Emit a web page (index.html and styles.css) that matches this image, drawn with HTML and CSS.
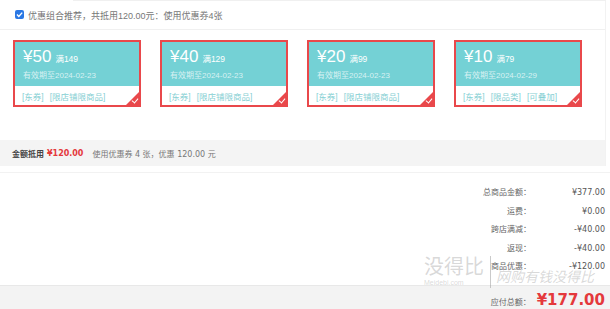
FILE: index.html
```html
<!DOCTYPE html>
<html lang="zh">
<head>
    <meta charset="UTF-8">
    <title>优惠券结算</title>
    <link rel="stylesheet" href="styles.css">
</head>
<body>
    <div class="page">
        <div class="top-edge"></div>
        <div class="coupon-panel">
            <div class="recommend">
                <span class="check">
                    <svg width="9" height="9" viewBox="0 0 9 9"><path d="M2 4.6 L3.8 6.4 L7.2 2.6" fill="none" stroke="#fff" stroke-width="1.4"/></svg>
                </span>
                <span>优惠组合推荐，共抵用120.00元：使用优惠券4张</span>
            </div>

            <div class="coupons">
                <div class="coupon">
                    <div class="coupon-top">
                        <div class="price"><span class="amount">¥50</span><span class="limit">满149</span></div>
                        <div class="date">有效期至2024-02-23</div>
                    </div>
                    <div class="tags"><span>[东券]</span><span>[限店铺限商品]</span></div>
                    <span class="corner"></span>
                </div>
                <div class="coupon">
                    <div class="coupon-top">
                        <div class="price"><span class="amount">¥40</span><span class="limit">满129</span></div>
                        <div class="date">有效期至2024-02-23</div>
                    </div>
                    <div class="tags"><span>[东券]</span><span>[限店铺限商品]</span></div>
                    <span class="corner"></span>
                </div>
                <div class="coupon">
                    <div class="coupon-top">
                        <div class="price"><span class="amount">¥20</span><span class="limit">满99</span></div>
                        <div class="date">有效期至2024-02-23</div>
                    </div>
                    <div class="tags"><span>[东券]</span><span>[限店铺限商品]</span></div>
                    <span class="corner"></span>
                </div>
                <div class="coupon">
                    <div class="coupon-top">
                        <div class="price"><span class="amount">¥10</span><span class="limit">满79</span></div>
                        <div class="date">有效期至2024-02-29</div>
                    </div>
                    <div class="tags"><span>[东券]</span><span>[限品类]</span><span>[可叠加]</span></div>
                    <span class="corner"></span>
                </div>
            </div>

            <div class="deduct">
                <span class="deduct-label">金额抵用</span>
                <span class="deduct-value">¥120.00</span>
                <span class="deduct-note">使用优惠券 4 张，优惠 120.00 元</span>
            </div>
        </div>

        <div class="summary">
            <div class="row"><span class="label">总商品金额：</span><span class="value">¥377.00</span></div>
            <div class="row"><span class="label">运费：</span><span class="value">¥0.00</span></div>
            <div class="row"><span class="label">跨店满减：</span><span class="value">-¥40.00</span></div>
            <div class="row"><span class="label">返现：</span><span class="value">-¥40.00</span></div>
            <div class="row"><span class="label">商品优惠：</span><span class="value">-¥120.00</span></div>
        </div>

        <div class="total">
            <span class="label">应付总额：</span>
            <span class="total-value">¥177.00</span>
        </div>

        <div class="watermark">
            <div class="wm-logo">
                <div class="wm-name">没得比</div>
                <div class="wm-site">Meidebi.com</div>
            </div>
            <div class="wm-slogan">网购有钱没得比</div>
        </div>
    </div>
</body>
</html>
```

FILE: styles.css
```css
body {
    margin: 0;
    padding: 0;
    background: #fff;
    font-family: "DejaVu Sans", "Noto Sans CJK SC", sans-serif;
    font-size: 8px;
    color: #666;
}
.page {
    position: relative;
    width: 610px;
    height: 309px;
    overflow: hidden;
}
.top-edge {
    height: 1px;
    margin: 0 4px 0 73px;
    background: #f0f0f0;
}
.coupon-panel {
    width: 605px;
    border-right: 1px solid #f2f2f2;
}
.recommend {
    display: flex;
    align-items: center;
    height: 28px;
    padding-left: 15px;
    border-bottom: 1px solid #f0f0f0;
    font-family: "Liberation Sans", "Noto Sans CJK SC", sans-serif;
    font-size: 9px;
    color: #777;
}
.check {
    display: inline-flex;
    align-items: center;
    justify-content: center;
    width: 9px;
    height: 9px;
    margin-right: 4px;
    margin-top: -2px;
    background: #2b78e4;
    border-radius: 2px;
}
.coupons {
    display: flex;
    gap: 19px;
    padding: 10px 0 0 13px;
    font-family: "Liberation Sans", "Noto Sans CJK SC", sans-serif;
}
.coupon {
    position: relative;
    width: 124px;
    height: 63px;
    border: 2px solid #e9484b;
    background: #fff;
}
.coupon-top {
    height: 44px;
    background: #74d1d5;
    color: #fff;
    padding-left: 8px;
    box-sizing: border-box;
    padding-top: 5px;
}
.price {
    display: flex;
    align-items: baseline;
    height: 19px;
}
.amount {
    font-size: 17px;
    line-height: 19px;
}
.limit {
    margin-left: 4px;
    font-size: 8.5px;
}
.date {
    margin-top: 3px;
    font-size: 8px;
    color: rgba(255, 255, 255, 0.72);
}
.tags {
    display: flex;
    gap: 6px;
    padding: 4px 0 0 7px;
    font-size: 8.5px;
    color: #86cfd3;
}
.corner {
    position: absolute;
    right: 0;
    bottom: 0;
    width: 0;
    height: 0;
    border-left: 13px solid transparent;
    border-bottom: 13px solid #e9484b;
}
.corner::after {
    content: "";
    position: absolute;
    right: 2px;
    bottom: -11px;
    width: 3px;
    height: 5px;
    border: solid #fff;
    border-width: 0 1px 1px 0;
    transform: rotate(40deg);
}
.deduct {
    display: flex;
    align-items: center;
    height: 26px;
    margin-top: 33px;
    padding-left: 12px;
    background: #f4f4f4;
}
.deduct-label {
    font-weight: bold;
    color: #444;
}
.deduct-value {
    margin-left: 3px;
    font-weight: bold;
    color: #e4393c;
}
.deduct-note {
    margin-left: 9px;
    color: #777;
}
.summary {
    margin-top: 6px;
    border-top: 1px solid #f2f2f2;
    padding: 11px 5px 0 0;
}
.row {
    display: grid;
    grid-template-columns: 1fr 74px;
    height: 18.5px;
    line-height: 18.5px;
}
.row .label {
    text-align: right;
    color: #666;
}
.row .value {
    text-align: right;
    color: #555;
}
.total {
    position: absolute;
    left: 0;
    right: 0;
    top: 285px;
    height: 24px;
    border-top: 1px solid #e8e8e8;
    background: #f3f3f3;
    display: flex;
    justify-content: flex-end;
    align-items: flex-end;
    padding-right: 5px;
}
.total .label {
    margin-bottom: 3px;
    color: #666;
}
.total-value {
    margin-left: 6px;
    font-size: 15px;
    line-height: 19px;
    font-weight: bold;
    color: #e4393c;
}
.watermark {
    position: absolute;
    left: 424px;
    top: 256px;
    display: flex;
    align-items: flex-start;
    color: rgba(170, 170, 170, 0.45);
    pointer-events: none;
}
.wm-logo {
    padding-right: 6px;
    border-right: 1px solid rgba(150, 150, 150, 0.5);
}
.wm-name {
    font-size: 20px;
    line-height: 22px;
}
.wm-site {
    font-family: "Liberation Sans", sans-serif;
    font-size: 7px;
    line-height: 10px;
}
.wm-slogan {
    margin: 10px 0 0 5px;
    font-size: 14px;
    font-style: italic;
}
```
